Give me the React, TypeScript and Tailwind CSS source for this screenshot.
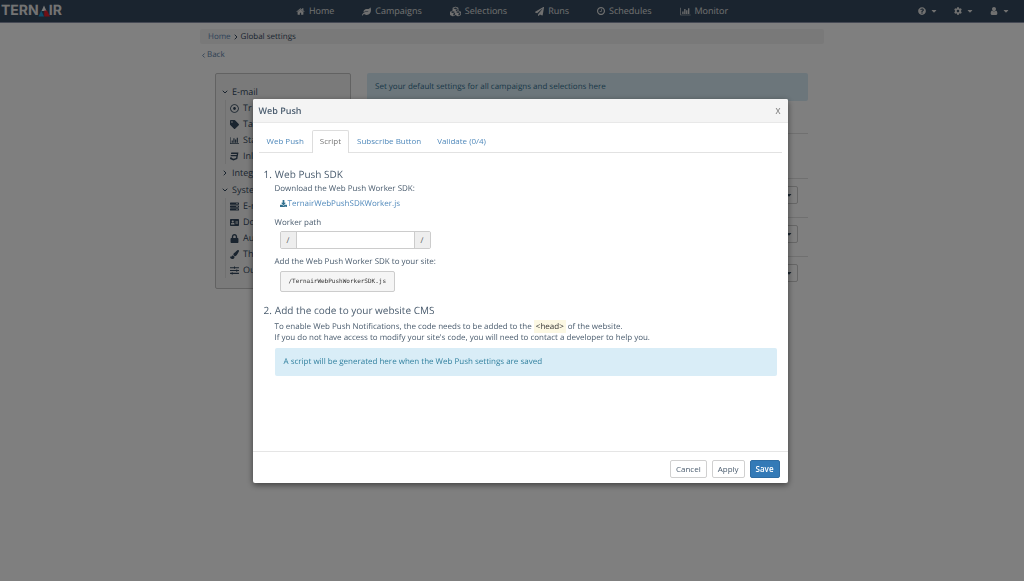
import React from "react";
import { ChevronDown, ChevronLeft, ChevronRight } from "lucide-react";
import {
  FaAddressCard,
  FaCaretDown,
  FaCog,
  FaCss3,
  FaCubes,
  FaDownload,
  FaLeaf,
  FaLock,
  FaPaintBrush,
  FaPaperPlane,
  FaQuestionCircle,
  FaRegDotCircle,
  FaServer,
  FaSlidersH,
  FaTag,
} from "react-icons/fa";

type IconProps = { className?: string };
type IconType = React.ComponentType<IconProps>;

const HomeIcon = ({ className }: IconProps) => (
  <svg viewBox="0 0 1792 1792" fill="currentColor" className={className} aria-hidden="true">
    <path d="M1472 992v480q0 26-19 45t-45 19h-384v-384h-256v384h-384q-26 0-45-19t-19-45v-480q0-1 .5-3t.5-3l575-474 575 474q1 2 1 6zm223-69l-62 74q-8 9-21 11h-3q-13 0-21-7l-692-577-692 577q-12 8-24 7-13-2-21-11l-62-74q-8-10-7-23.5t11-21.5l719-599q32-26 76-26t76 26l244 204v-195q0-14 9-23t23-9h192q14 0 23 9t9 23v408l219 182q10 8 11 21.5t-7 23.5z" />
  </svg>
);

const ClockIcon = ({ className }: IconProps) => (
  <svg viewBox="0 128 1536 1536" fill="currentColor" className={className} aria-hidden="true">
    <path d="M896 544v448q0 14-9 23t-23 9h-320q-14 0-23-9t-9-23v-64q0-14 9-23t23-9h224v-352q0-14 9-23t23-9h64q14 0 23 9t9 23zm416 352q0-148-73-273t-198-198-273-73-273 73-198 198-73 273 73 273 198 198 273 73 273-73 198-198 73-273zm224 0q0 209-103 385.5t-279.5 279.5-385.5 103-385.5-103-279.5-279.5-103-385.5 103-385.5 279.5-279.5 385.5-103 385.5 103 279.5 279.5 103 385.5z" />
  </svg>
);

const ChartIcon = ({ className }: IconProps) => (
  <svg viewBox="0 0 2048 1792" fill="currentColor" className={className} aria-hidden="true">
    <path d="M640 896v512h-256v-512h256zm384-512v1024h-256v-1024h256zm1024 1152v128h-2048v-1536h128v1408h1920zm-640-896v768h-256v-768h256zm384-384v1152h-256v-1152h256z" />
  </svg>
);

const UserIcon = ({ className }: IconProps) => (
  <svg viewBox="128 128 1536 1536" fill="currentColor" className={className} aria-hidden="true">
    <path d="M1536 1399q0 109-62.5 187t-150.5 78h-854q-88 0-150.5-78t-62.5-187q0-85 8.5-160.5t31.5-152 58.5-131 94-89 134.5-34.5q131 128 313 128t313-128q76 0 134.5 34.5t94 89 58.5 131 31.5 152 8.5 160.5zm-256-887q0 159-112.5 271.5t-271.5 112.5-271.5-112.5-112.5-271.5 112.5-271.5 271.5-112.5 271.5 112.5 112.5 271.5z" />
  </svg>
);

const navItems: { label: string; icon: IconType; size: string }[] = [
  { label: "Home", icon: HomeIcon, size: "size-[9px]" },
  { label: "Campaigns", icon: FaLeaf, size: "size-[9px]" },
  { label: "Selections", icon: FaCubes, size: "size-[11px]" },
  { label: "Runs", icon: FaPaperPlane, size: "size-[9px]" },
  { label: "Schedules", icon: ClockIcon, size: "size-2" },
  { label: "Monitor", icon: ChartIcon, size: "h-[9px] w-[11px]" },
];

const userMenus: { label: string; icon: IconType }[] = [
  { label: "Help", icon: FaQuestionCircle },
  { label: "Settings", icon: FaCog },
  { label: "Account", icon: UserIcon },
];

const emailItems: { label: string; icon: IconType }[] = [
  { label: "Tr", icon: FaRegDotCircle },
  { label: "Tags", icon: FaTag },
  { label: "Stats", icon: ChartIcon },
  { label: "Inline", icon: FaCss3 },
];

const systemItems: { label: string; icon: IconType }[] = [
  { label: "E-mail", icon: FaServer },
  { label: "Domain", icon: FaAddressCard },
  { label: "Auth", icon: FaLock },
  { label: "Theme", icon: FaPaintBrush },
  { label: "Output", icon: FaSlidersH },
];

function Logo() {
  return (
    <a href="#" className="flex items-center pl-px font-[Inter,sans-serif] text-[14px] leading-[22px] font-bold text-[#e6e6e6]">
      TERN
      <svg viewBox="0 0 24 24" className="-mx-px size-3" aria-hidden="true">
        <path d="M12 1 17 12H7z" fill="#f2f2f2" />
        <path d="M6.500 11 12 23H1z" fill="#1c9ad6" />
        <path d="M12.500 11H18L24 23H12.500z" fill="#e2202c" />
      </svg>
      IR
    </a>
  );
}

function NavBar() {
  return (
    <header className="grid grid-cols-[1fr_auto_1fr] items-center border-b border-[#8a93a8] bg-[#34495e] text-[9px] text-[#e0e0e0]">
      <Logo />
      <nav className="flex gap-7">
        {navItems.map(({ label, icon: Icon, size }) => (
          <a key={label} href="#" className="flex items-center gap-1 leading-[22px]">
            <Icon className={size} />
            {label}
          </a>
        ))}
      </nav>
      <div className="flex justify-end gap-4 pr-[14px]">
        {userMenus.map(({ label, icon: Icon }) => (
          <button key={label} type="button" aria-label={label} className="flex items-center gap-1">
            <Icon className="size-2" />
            <FaCaretDown className="size-2" />
          </button>
        ))}
      </div>
    </header>
  );
}

function TreeGroup({ label, items }: { label: string; items?: { label: string; icon: IconType }[] }) {
  const Chevron = items ? ChevronDown : ChevronRight;
  return (
    <div>
      <a href="#" className="flex h-4 items-center gap-[3px]">
        <Chevron className="size-2" strokeWidth={3} />
        {label}
      </a>
      {items && (
        <ul className="ml-1 border-l border-[#e0e0e0] pl-1">
          {items.map(({ label: name, icon: Icon }) => (
            <li key={name}>
              <a href="#" className="flex h-4 items-center gap-1">
                <Icon className="size-[9px]" />
                {name}
              </a>
            </li>
          ))}
        </ul>
      )}
    </div>
  );
}

function SettingSelect({ label }: { label: string }) {
  return (
    <div className="border-t border-[#e0e0e0] px-[10px] pt-[7px] pb-[13px]">
      <div className="relative">
        <select
          aria-label={label}
          className="block h-[18px] w-full appearance-none rounded-xs border border-[#ccc] bg-white"
        />
        <FaCaretDown className="pointer-events-none absolute top-[5px] right-[5px] size-2" />
      </div>
    </div>
  );
}

function SettingsPage() {
  return (
    <main className="mx-auto max-w-[624px] pt-[6px]">
      <nav aria-label="Breadcrumb" className="flex h-[15px] items-center gap-px rounded-xs bg-[#f2f2f2] px-2 text-[8px]">
        <a href="#" className="text-[#5b86b3]">Home</a>
        <ChevronRight className="size-2" strokeWidth={3} />
        <span>Global settings</span>
      </nav>
      <a href="#" className="mt-[5px] flex h-3 w-fit items-center text-[8px] text-[#5b7fa6]">
        <ChevronLeft className="size-[7px]" strokeWidth={3} />
        Back
      </a>
      <div className="mt-3 grid grid-cols-[136px_1fr] items-start gap-4 pr-4 pl-[15px]">
        <aside className="flex flex-col gap-px overflow-hidden rounded-xs border border-[#c4c4c4] bg-[#f5f5f5] px-[5px] pt-[10px] pb-[10px] text-[9px]">
          <TreeGroup label="E-mail" items={emailItems} />
          <TreeGroup label="Integr" />
          <TreeGroup label="System" items={systemItems} />
        </aside>
        <section>
          <p className="rounded-xs bg-[#d9edf7] px-2 py-2 text-[8px] leading-3 text-[#31708f]">
            Set your default settings for all campaigns and selections here
          </p>
          <div className="mt-8 h-[45px] border-t border-[#e0e0e0]" />
          <SettingSelect label="Default campaign" />
          <SettingSelect label="Default selection" />
          <SettingSelect label="Default schedule" />
        </section>
      </div>
    </main>
  );
}

const tabs = ["Web Push", "Script", "Subscribe Button", "Validate (0/4)"];

function WebPushDialog() {
  return (
    <div className="fixed inset-0 flex items-start justify-center bg-black/50 pt-[99px] pl-4">
      <div
        role="dialog"
        aria-modal="true"
        aria-labelledby="dialog-title"
        className="w-full max-w-[535px] rounded-xs bg-white text-[8px] leading-[11px] text-[#4a5c6e] shadow-[0_2px_6px_rgba(0,0,0,0.5)]"
      >
        <div className="flex h-6 items-center justify-between rounded-t-xs border-b border-[#e8e8e8] bg-[#f4f4f4] pr-[7px] pb-px pl-[6px]">
          <h1 id="dialog-title" className="text-[9px] font-semibold">Web Push</h1>
          <button type="button" aria-label="Close" className="font-semibold text-[#8a8a8a]">X</button>
        </div>
        <div className="min-h-[328px] px-[6px] pt-[7px]">
          <div role="tablist" className="flex border-b border-[#e2e2e2]">
            {tabs.map((tab) => (
              <button
                key={tab}
                type="button"
                role="tab"
                aria-selected={tab === "Script"}
                className={
                  tab === "Script"
                    ? "-mb-px h-[23px] rounded-t-xs border border-b-0 border-[#ddd] bg-white px-[7px] pb-[3px] text-[#777]"
                    : "h-[22px] px-2 pb-px text-[#5089bb]"
                }
              >
                {tab}
              </button>
            ))}
          </div>
          <ol className="pt-[14px] pr-[5px] pl-4">
            <li>
              <div className="-ml-[11px] flex gap-[3px] text-[10px] leading-[14px]">
                <span>1.</span>
                <h2>Web Push SDK</h2>
              </div>
              <p className="mt-[2px]">Download the Web Push Worker SDK:</p>
              <a href="#" className="mt-1 ml-[5px] flex items-center gap-px text-[#5089bb]">
                <FaDownload className="size-[7px] text-[#31708f]" />
                TernairWebPushSDKWorker.js
              </a>
              <label htmlFor="worker-path" className="mt-2 block">Worker path</label>
              <div className="mt-[3px] ml-[5px] flex h-[18px] w-[151px] overflow-hidden rounded-xs border border-[#ccc] text-[#555]">
                <span className="flex w-4 items-center justify-center border-r border-[#ccc] bg-[#eee]">/</span>
                <input id="worker-path" type="text" className="min-w-0 flex-1 bg-white px-1 outline-none" />
                <span className="flex w-4 items-center justify-center border-l border-[#ccc] bg-[#eee]">/</span>
              </div>
              <p className="mt-[7px]">Add the Web Push Worker SDK to your site:</p>
              <pre className="mt-1 ml-[5px] w-fit rounded-xs border border-[#ccc] bg-[#f5f5f5] px-2 py-1 font-['DejaVu_Sans_Mono',monospace] text-[6px] leading-[11px] text-[#333]">
                /TernairWebPushWorkerSDK.js
              </pre>
            </li>
            <li className="mt-[11px]">
              <div className="-ml-[11px] flex gap-[3px] text-[10px] leading-[14px]">
                <span>2.</span>
                <h2>Add the code to your website CMS</h2>
              </div>
              <p className="mt-1">
                To enable Web Push Notifications, the code needs to be added to the{" "}
                <mark className="bg-[#fcf8e3] px-[2px] py-px text-[#333]">&lt;head&gt;</mark> of the website.
                <br />
                If you do not have access to modify your site's code, you will need to contact a developer to help you.
              </p>
              <p className="mt-[5px] rounded-xs bg-[#d9edf7] px-[9px] py-2 leading-3 text-[#31809f]">
                A script will be generated here when the Web Push settings are saved
              </p>
            </li>
          </ol>
        </div>
        <div className="flex justify-end gap-[5px] border-t border-[#e5e5e5] px-2 pt-2 pb-[5px]">
          <button type="button" className="h-[18px] rounded-xs border border-[#d0d0d0] bg-white px-[5px] pb-px">Cancel</button>
          <button type="button" className="h-[18px] rounded-xs border border-[#d0d0d0] bg-white px-[5px] pb-px">Apply</button>
          <button type="button" className="h-[18px] rounded-xs border border-[#2e6da4] bg-[#337ab7] px-[5px] pb-px font-semibold text-white">Save</button>
        </div>
      </div>
    </div>
  );
}

export default function App() {
  return (
    <div className="min-h-screen bg-white font-['Open_Sans',sans-serif] text-[#34495e] [text-rendering:geometricPrecision]">
      <NavBar />
      <SettingsPage />
      <WebPushDialog />
    </div>
  );
}
